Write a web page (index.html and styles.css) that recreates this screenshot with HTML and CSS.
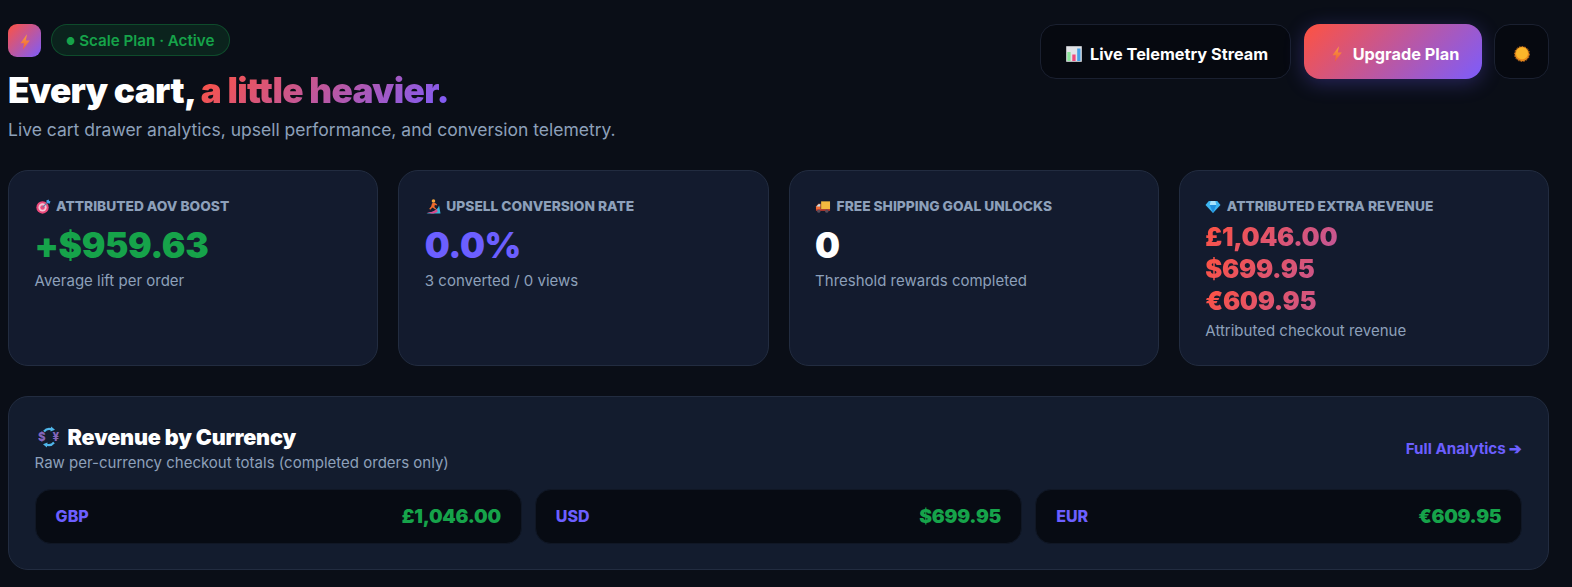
FILE: index.html
```html
<!DOCTYPE html>
<html lang="en">
<head>
<meta charset="utf-8">
<title>Dashboard</title>
<link rel="stylesheet" href="styles.css">
</head>
<body>
<svg class="defs" width="0" height="0" aria-hidden="true">
  <defs>
    <linearGradient id="boltG" x1="0" y1="0" x2="0" y2="1"><stop offset="0" stop-color="#fba23c"/><stop offset="1" stop-color="#ee5a3c"/></linearGradient>
    <symbol id="bolt" viewBox="0 0 16 16"><path fill="url(#boltG)" d="M10 .3 3.400 9.300h3.600L5.800 15.700 12.800 6.400H8.800z"/></symbol>
  </defs>
</svg>
<header class="top">
  <div class="top-left">
    <div class="brand-row">
      <div class="logo"><svg class="ic-bolt"><use href="#bolt"/></svg></div>
      <div class="pill"><span class="dot">●</span><span>Scale Plan · Active</span></div>
    </div>
    <h1 class="title">Every cart, <span class="grad">a little heavier.</span></h1>
    <p class="subtitle">Live cart drawer analytics, upsell performance, and conversion telemetry.</p>
  </div>
  <div class="actions">
    <a class="btn btn-dark">
      <svg class="ic" viewBox="0 0 16 16"><rect x="0.200" y="0.200" width="15.600" height="15.600" fill="#e2e4e8"/><rect x="1.300" y="6" width="3.300" height="9" fill="#8be49a"/><rect x="6.300" y="8.500" width="3.300" height="6.500" fill="#f04a7e"/><rect x="11.200" y="2.500" width="3.300" height="12.500" fill="#45a0e6"/></svg>
      <span>Live Telemetry Stream</span></a>
    <a class="btn btn-grad"><svg class="ic"><use href="#bolt"/></svg><span>Upgrade Plan</span></a>
    <a class="btn-icon"><svg class="ic" viewBox="0 0 16 16"><circle cx="8" cy="8" r="7.500" stroke="#d97a20" stroke-width=".9" stroke-dasharray="1.600 1.300" fill="none"/><circle cx="8" cy="8" r="7.200" fill="#e8891c"/><circle cx="8" cy="7.300" r="6" fill="#fbb62a"/></svg></a>
  </div>
</header>

<section class="cards">
  <article class="card">
    <div class="label"><svg class="ic-s" viewBox="0 0 16 16"><circle cx="7.500" cy="9" r="6.600" fill="#ec4a7c"/><circle cx="7.500" cy="9" r="4.400" fill="#f6c6d6"/><circle cx="7.500" cy="9" r="2.400" fill="#ec4a7c"/><path d="M7.500 9 14 2.500" stroke="#5b7fa8" stroke-width="1.200"/><path d="M11.500 1.500 14 .5l.500 1.500 1.500.500-1 2.500-3-1z" fill="#4aa3e8"/></svg><span>ATTRIBUTED AOV BOOST</span></div>
    <div class="value green">+$959.63</div>
    <div class="note">Average lift per order</div>
  </article>
  <article class="card">
    <div class="label"><svg class="ic-s" viewBox="0 0 16 16"><path d="M1 15.500C5 14 12 14 14.500 7l1.500 8.500z" fill="#38b6d8"/><path d="M1.500 14.500c4 0 8-1 10.500-4l1 3c-3 2-7 2.500-11.500 1z" fill="#d94a8c"/><circle cx="8.500" cy="2.200" r="1.900" fill="#f5a63c"/><path d="M7 4.500 10 4l2.500 2-1 .8L10 6l-.5 2.500 2 2-1 .8L7.500 9 5 11.500 4 10.500 6 8z" fill="#ec6a2c"/></svg><span>UPSELL CONVERSION RATE</span></div>
    <div class="value purple">0.0%</div>
    <div class="note">3 converted / 0 views</div>
  </article>
  <article class="card">
    <div class="label"><svg class="ic-s" viewBox="0 0 16 16"><rect x="6" y="2.500" width="9.500" height="8.500" fill="#f3b93f"/><path d="M5.500 5H3L.5 8v3.500h5z" fill="#f06a30"/><path d="M1 8l2.300-2.500h1.700V8z" fill="#bfe3f5"/><rect y="11" x=".5" width="15" height="1.500" fill="#d9402f"/><circle cx="3.500" cy="13" r="1.700" fill="#5a4a58"/><circle cx="12" cy="13" r="1.700" fill="#5a4a58"/></svg><span>FREE SHIPPING GOAL UNLOCKS</span></div>
    <div class="value white">0</div>
    <div class="note">Threshold rewards completed</div>
  </article>
  <article class="card">
    <div class="label"><svg class="ic-s" viewBox="0 0 16 16"><path d="M3.500 2h9L16 6.500 8 15 0 6.500z" fill="#3db5f0"/><path d="M4.500 6.500h7L8 15z" fill="#1f8fdc"/><path d="M5.500 2h5l1 4.500h-7z" fill="#a5e3fb"/></svg><span>ATTRIBUTED EXTRA REVENUE</span></div>
    <div class="multi"><span class="grad">£1,046.00</span><span class="grad">$699.95</span><span class="grad">€609.95</span></div>
    <div class="note">Attributed checkout revenue</div>
  </article>
</section>

<section class="panel">
  <div class="panel-head">
    <div>
      <h2 class="panel-title"><svg class="ic-l" viewBox="0 0 22 22"><path d="M6 5.500a7 7 0 0 1 8-2" fill="none" stroke="#4fb6ea" stroke-width="2.200"/><path d="M13 .5l4 3.200-4.500 1.800z" fill="#4fb6ea"/><path d="M16 16.500a7 7 0 0 1-8 2" fill="none" stroke="#4fb6ea" stroke-width="2.200"/><path d="M9 21.500l-4-3.200 4.500-1.800z" fill="#4fb6ea"/><text class="sym" x="0" y="15">$</text><text class="sym" x="14.500" y="15">¥</text></svg><span>Revenue by Currency</span></h2>
      <p class="panel-sub">Raw per-currency checkout totals (completed orders only)</p>
    </div>
    <a class="link">Full Analytics ➔</a>
  </div>
  <div class="rows">
    <div class="row"><span class="code">GBP</span><span class="amt">£1,046.00</span></div>
    <div class="row"><span class="code">USD</span><span class="amt">$699.95</span></div>
    <div class="row"><span class="code">EUR</span><span class="amt">€609.95</span></div>
  </div>
</section>
</body>
</html>
```
FILE: styles.css
```css
* { box-sizing: border-box; }
html, body { height: 100%; }
body {
  margin: 0;
  padding: 24px 23px 0 8px;
  overflow: hidden;
  background: #0a0e17;
  color: #fff;
  font-family: Inter, "Liberation Sans", sans-serif;
}
.defs { position: absolute; }
.top { display: flex; justify-content: space-between; align-items: flex-start; margin-bottom: 28px; }
.brand-row { display: flex; align-items: flex-start; gap: 10px; height: 33px; margin-bottom: 12px; }
.logo {
  width: 33px; height: 33px; border-radius: 9px; padding-top: 2px;
  background: linear-gradient(135deg, #ff5240, #7c5cfc);
  display: flex; align-items: center; justify-content: center;
}
.ic-bolt { width: 16px; height: 16px; }
.pill {
  height: 32px; padding: 1px 15px 0 14px; border-radius: 999px;
  display: flex; align-items: center; gap: 4px;
  background: rgba(22,163,74,.14);
  border: 1px solid rgba(22,163,74,.32);
  color: #16a34a;
  font-size: 15.200px; font-weight: 600;
}
.dot { font-size: 10px; }
.title { margin: 0; font-size: 35.200px; line-height: 42px; font-weight: 900; letter-spacing: -.65px; }
.grad {
  background: linear-gradient(135deg, #ff5240, #7c5cfc);
  -webkit-background-clip: text; background-clip: text;
  color: transparent;
}
.subtitle { margin: 7px 0 0; font-size: 17.500px; line-height: 24px; color: #8da0ba; }
.actions { display: flex; gap: 12.500px; align-items: center; }
.btn {
  height: 55px; border-radius: 16px; padding: 4px 0 0 3px; display: flex; align-items: center; justify-content: center;
  font-size: 16.300px; font-weight: 700; color: #fff; gap: 8px;
}
.btn-dark { width: 251px; background: #060910; border: 1px solid #1a2030; }
.btn-grad {
  width: 178px;
  background: linear-gradient(135deg, #ff5240, #7c5cfc);
  box-shadow: 0 4px 20px rgba(108,92,252,.3);
}
.btn-icon {
  width: 55px; height: 55px; border-radius: 16px; padding-top: 4px; background: #060910; border: 1px solid #1a2030;
  display: flex; align-items: center; justify-content: center;
}
.ic { width: 16px; height: 16px; flex: none; }
.cards { display: grid; grid-template-columns: repeat(4, 1fr); gap: 20px; margin-bottom: 30.500px; }
.card {
  height: 195.500px; padding: 26px 25.600px; border-radius: 20px;
  background: #131b2e; border: 1px solid #222c40;
}
.label {
  display: flex; align-items: center; gap: 5.500px;
  font-size: 13.750px; font-weight: 800; line-height: 18px; color: #8da0ba;
}
.ic-s { width: 16px; height: 15px; flex: none; }
.value { margin-top: 9px; font-size: 35.200px; font-weight: 900; line-height: 42px; letter-spacing: -.4px; }
.green { color: #16a34a; }
.purple { color: #6c5fff; }
.white { color: #fff; }
.note { margin-top: 5px; font-size: 15px; line-height: 20px; color: #8da0ba; }
.multi { display: flex; flex-direction: column; margin-top: 6px; font-size: 25.600px; font-weight: 900; line-height: 32px; letter-spacing: -.35px; }
.multi + .note { margin-top: 4px; }
.panel {
  height: 174px; padding: 25.100px 25.600px; border-radius: 20px;
  background: #131c2e; border: 1px solid #222c40;
}
.panel-head { display: flex; justify-content: space-between; align-items: center; margin-bottom: 15px; }
.panel-title { margin: 0; display: flex; align-items: center; gap: 8px; font-size: 21.600px; line-height: 30px; font-weight: 900; letter-spacing: -.2px; }
.ic-l { width: 22px; height: 22px; flex: none; margin-left: 3px; }
.sym { font-size: 11.500px; font-weight: 800; fill: #8566bd; font-family: Inter, sans-serif; letter-spacing: 0; }
.panel-sub { margin: 0; font-size: 15px; line-height: 22px; color: #8da0ba; }
.link { font-size: 15.200px; font-weight: 700; color: #6c5fff; }
.rows { display: grid; grid-template-columns: repeat(3, 1fr); gap: 13px; }
.row {
  height: 54.500px; padding: 0 20px; border-radius: 16px;
  display: flex; justify-content: space-between; align-items: center;
  background: #070b13; border: 1px solid #101725;
}
.code { font-size: 16px; font-weight: 800; color: #6c5fff; }
.amt { font-size: 19.200px; font-weight: 900; color: #16a34a; letter-spacing: -.25px; }
```
